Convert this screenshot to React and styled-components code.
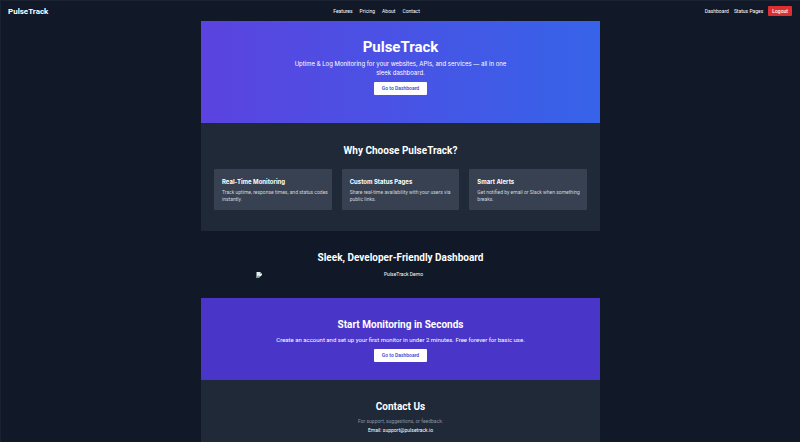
import React from "react";
import styled, { createGlobalStyle } from "styled-components";

const GlobalStyle = createGlobalStyle`
  *, *::before, *::after { box-sizing: border-box; }
  body {
    margin: 0;
    background: #111827;
    color: #ffffff;
    font-family: Roboto, "Liberation Sans", sans-serif;
    font-size: 5px;
    line-height: 7px;
  }
  h1, h2, h3, p { margin: 0; }
  a { color: inherit; text-decoration: none; }
`;

const Page = styled.div`
  display: flex;
  flex-direction: column;
  min-height: 100vh;
  border-top: 1px solid #1b2332;
  border-left: 1px solid #1b2332;
`;

const Header = styled.header`
  display: flex;
  justify-content: space-between;
  align-items: center;
  height: 20px;
  padding: 0 8px 0 7px;
`;

const Brand = styled.a`
  font-size: 8px;
  font-weight: 700;
`;

const Nav = styled.nav`
  display: flex;
  align-items: center;
  gap: ${(p) => p.$gap};
`;

const LogoutButton = styled.button`
  height: 10px;
  padding: 0 4px;
  border: 0;
  border-radius: 1px;
  background: #dc2f2f;
  color: #ffffff;
  font: inherit;
  font-weight: 500;
  line-height: 10px;
`;

const Main = styled.main`
  display: flex;
  flex: 1;
  flex-direction: column;
  width: 100%;
  max-width: 399px;
  margin: 0 auto;
`;

const backgrounds = {
  hero: "linear-gradient(to right, #5b43e0, #3663e9)",
  panel: "#1f2937",
  plain: "transparent",
  accent: "#4935c8",
};

const Section = styled.section`
  display: flex;
  flex-direction: column;
  align-items: center;
  flex-grow: ${(p) => (p.$grow ? 1 : 0)};
  padding: ${(p) => p.$pad};
  background: ${(p) => backgrounds[p.$tone]};
  text-align: center;
`;

const HeroTitle = styled.h1`
  margin-bottom: 3px;
  font-size: 15px;
  font-weight: 700;
  line-height: 17px;
`;

const HeroText = styled.p`
  max-width: 220px;
  margin-bottom: 5px;
  font-family: Inter, "Liberation Sans", sans-serif;
  font-size: 6px;
  line-height: 9px;
`;

const Heading = styled.h2`
  margin-bottom: ${(p) => p.$gap};
  font-size: 10px;
  font-weight: 700;
  line-height: 13px;
`;

const ActionLink = styled.a`
  padding: 3px 8px;
  border-radius: 1px;
  background: #ffffff;
  color: #4338ca;
  font-weight: 500;
`;

const Cards = styled.div`
  display: grid;
  grid-template-columns: repeat(3, 1fr);
  gap: 10px;
  width: 100%;
`;

const Card = styled.article`
  padding: 9px 3px 7px 8px;
  border-radius: 1px;
  background: #374151;
  text-align: left;
`;

const CardTitle = styled.h3`
  margin-bottom: 3px;
  font-family: Inter, "Liberation Sans", sans-serif;
  font-size: 6px;
  font-weight: 700;
  line-height: 8px;
`;

const CardText = styled.p`
  color: #d1d5db;
`;

const Demo = styled.div`
  display: flex;
  width: 100%;
  max-width: 290px;
  align-items: center;
`;

const DemoCaption = styled.span`
  flex: 1;
`;

const Lead = styled.p`
  margin-bottom: 5px;
  font-size: 6px;
  line-height: 9px;
`;

const Muted = styled.p`
  margin-bottom: 2px;
  color: #8c94a1;
`;

const features = [
  { title: "Real-Time Monitoring", text: "Track uptime, response times, and status codes instantly." },
  { title: "Custom Status Pages", text: "Share real-time availability with your users via public links." },
  { title: "Smart Alerts", text: "Get notified by email or Slack when something breaks." },
];

function MissingImageIcon() {
  return (
    <svg width="6" height="6" viewBox="0 0 12 12" aria-hidden="true">
      <path d="M1 0h7l4 4v2L5 12H1z" fill="#e7eef5" />
      <path d="M8 0v4h4z" fill="#93a3b5" />
      <path d="M1 12V9l4-2 3 2-3 3z" fill="#74a98a" />
    </svg>
  );
}

export default function App() {
  return (
    <>
      <GlobalStyle />
      <Page>
        <Header>
          <Brand href="#top">PulseTrack</Brand>
          <Nav $gap="7px" aria-label="Main">
            <a href="#features">Features</a>
            <a href="#pricing">Pricing</a>
            <a href="#about">About</a>
            <a href="#contact">Contact</a>
          </Nav>
          <Nav $gap="5px" aria-label="Account">
            <a href="#dashboard">Dashboard</a>
            <a href="#status">Status Pages</a>
            <LogoutButton type="button">Logout</LogoutButton>
          </Nav>
        </Header>
        <Main id="top">
          <Section $tone="hero" $pad="18px 13px 28px">
            <HeroTitle>PulseTrack</HeroTitle>
            <HeroText>
              Uptime &amp; Log Monitoring for your websites, APIs, and services — all in one sleek dashboard.
            </HeroText>
            <ActionLink href="#dashboard">Go to Dashboard</ActionLink>
          </Section>
          <Section $tone="panel" $pad="21px 13px 21px" id="features">
            <Heading $gap="12px">Why Choose PulseTrack?</Heading>
            <Cards>
              {features.map((f) => (
                <Card key={f.title}>
                  <CardTitle>{f.title}</CardTitle>
                  <CardText>{f.text}</CardText>
                </Card>
              ))}
            </Cards>
          </Section>
          <Section $tone="plain" $pad="20px 13px 20px">
            <Heading $gap="7px">Sleek, Developer-Friendly Dashboard</Heading>
            <Demo>
              <MissingImageIcon />
              <DemoCaption>PulseTrack Demo</DemoCaption>
            </Demo>
          </Section>
          <Section $tone="accent" $pad="20px 13px 18px">
            <Heading $gap="4px">Start Monitoring in Seconds</Heading>
            <Lead>Create an account and set up your first monitor in under 2 minutes. Free forever for basic use.</Lead>
            <ActionLink href="#dashboard">Go to Dashboard</ActionLink>
          </Section>
          <Section $tone="panel" $pad="20px 13px 8px" $grow id="contact">
            <Heading $gap="5px">Contact Us</Heading>
            <Muted>For support, suggestions, or feedback:</Muted>
            <p>
              Email: <a href="mailto:support@pulsetrack.io">support@pulsetrack.io</a>
            </p>
          </Section>
        </Main>
      </Page>
    </>
  );
}
